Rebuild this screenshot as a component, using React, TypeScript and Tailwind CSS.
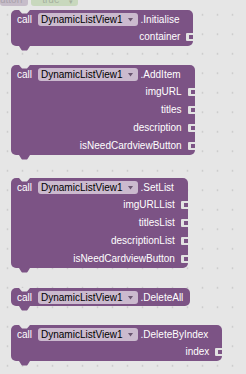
import React from 'react'

type BlockProps = {
  method: string
  inputs?: string[]
  className?: string
}

function TopNotch() {
  return (
    <svg className="absolute left-[8px] top-0" width="11" height="4" viewBox="0 0 11 4">
      <path d="M0 0 H11 L8 3.5 H3 Z" fill="#e6e6e6" />
    </svg>
  )
}

function BottomTab() {
  return (
    <svg className="absolute left-[8px] top-full" width="11" height="5" viewBox="0 0 11 5">
      <path d="M0 0 H11 L8.5 4 Q8 4.6 7 4.6 H4 Q3 4.6 2.5 4 Z" fill="#7c5385" />
    </svg>
  )
}

function Socket() {
  return (
    <svg className="absolute right-0 top-1/2 -translate-y-1/2" width="7" height="8" viewBox="0 0 7 8">
      <path d="M7 0 H1 Q0 0 0 1 V7 Q0 8 1 8 H7 V6 H3 V2 H7 Z" fill="#e2e2e2" />
    </svg>
  )
}

function Dropdown() {
  return (
    <span className="ml-[6px] flex h-[13px] items-center rounded-[3px] bg-[#cbbace] pl-[3px] pr-[5px] text-black">
      DynamicListView1
      <svg className="ml-[5px]" width="5" height="4" viewBox="0 0 5 4">
        <path d="M0 0 H5 L2.5 3.5 Z" fill="#6a5670" />
      </svg>
    </span>
  )
}

function Block({ method, inputs = [], className = '' }: BlockProps) {
  return (
    <div className={`relative flex flex-col self-start rounded-[5px] bg-[#7c5385] pt-px text-white ${className}`}>
      <TopNotch />
      <div className={`flex h-[17px] items-center pl-[6px] ${inputs.length ? 'pr-[14px]' : 'pr-[7px]'}`}>
        <span>call</span>
        <Dropdown />
        <span className="ml-[3px]">.{method}</span>
      </div>
      {inputs.map((label) => (
        <div key={label} className="relative flex h-[18px] items-center justify-end pr-[13px]">
          <span>{label}</span>
          <Socket />
        </div>
      ))}
      <BottomTab />
    </div>
  )
}

export default function App() {
  return (
    <div
      className="relative flex h-[374px] w-[246px] flex-col overflow-hidden bg-[#e6e6e6] bg-[radial-gradient(circle,#cdcdcd_0.8px,transparent_1.2px)] bg-[size:15px_19.5px] bg-[position:0px_5px] pl-[11px] text-[10px] leading-none"
      style={{ fontFamily: '"Liberation Sans", Arial, sans-serif' }}
    >
      {/* faded blocks cut off by the top edge */}
      <div className="absolute left-0 top-[-3px] flex items-end text-[#a9a2ab]">
        <div className="flex h-[9px] items-end rounded-[3px] bg-[#c6bcc9] pb-[1px] pl-0 pr-[6px]">utton</div>
        <div className="ml-[3px] flex h-[9px] w-[47px] items-end rounded-[3px] bg-[#c8d8bd] pb-[1px] pl-[11px] text-[#a6b09f]">
          true
          <span className="ml-[10px] text-[7px]">▾</span>
        </div>
      </div>

      <Block className="mt-[10px]" method="Initialise" inputs={['container']} />
      <Block
        className="mt-[19px]"
        method="AddItem"
        inputs={['imgURL', 'titles', 'description', 'isNeedCardviewButton']}
      />
      <Block
        className="mt-[23px]"
        method="SetList"
        inputs={['imgURLList', 'titlesList', 'descriptionList', 'isNeedCardviewButton']}
      />
      <Block className="mt-[20px]" method="DeleteAll" />
      <Block className="mt-[19px]" method="DeleteByIndex" inputs={['index']} />
    </div>
  )
}
